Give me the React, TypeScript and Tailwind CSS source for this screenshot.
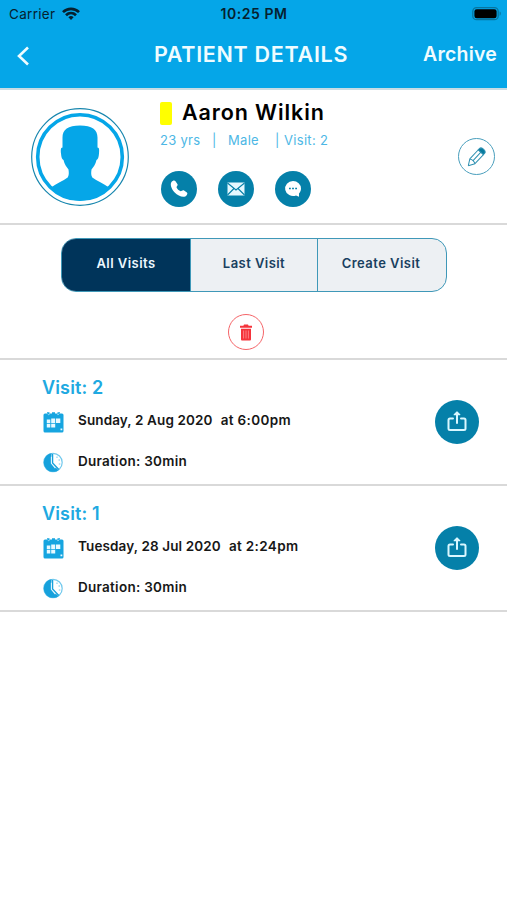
import React from "react";

function Wifi() {
  return (
    <svg width="18" height="14" viewBox="0 0 18 14" className="ml-[7px]" fill="none" stroke="#06212f" strokeWidth="2.7">
      <path d="M1 5.1C5.5.7 12.5.7 17 5.1" />
      <path d="M4 8.2C6.9 5.4 11.1 5.4 14 8.2" />
      <path d="M6.4 10.2a3.7 3.7 0 0 1 5.2 0L9 13z" fill="#06212f" stroke="none" />
    </svg>
  );
}

function Battery() {
  return (
    <svg width="30" height="14" viewBox="0 0 30 14">
      <rect x=".8" y=".7" width="25.4" height="12" rx="3.8" fill="none" stroke="#08759f" strokeWidth="1.3" />
      <rect x="2.4" y="2.2" width="22.2" height="9" rx="2.3" fill="#000" />
      <path d="M27.6 4.6v4.2c1.4-.5 1.8-3.7 0-4.2z" fill="#08759f" />
    </svg>
  );
}

function Avatar() {
  return (
    <svg width="98" height="98" viewBox="0 0 98 98">
      <circle cx="49" cy="49" r="48.3" fill="#fff" stroke="#1786ae" strokeWidth="1.2" />
      <circle cx="49" cy="49" r="42.3" fill="#fff" stroke="#05a6e8" strokeWidth="3.6" />
      <path
        d="M49 17.5c-12 0-17.5 4-17.500 12v10c-2 0-1.800 3-1.500 6 .3 3.500 1 6 2.500 6.500 1 4.500 3 7 5 9.500.5 4 .5 5.500-.8 8C32 73 25.500 75.500 20 79.500 27 88 37 92.500 49 92.500S71 88 78 79.500c-5.500-4-12-6.500-16.700-10-1.300-2.500-1.300-4-.8-8 2-2.500 4-5 5-9.500 1.500-.5 2.200-3 2.500-6.500.3-3 .5-6-1.500-6v-10c0-8-5.500-12-17.500-12z"
        fill="#05a6e8"
      />
    </svg>
  );
}

function RoundIcon({ children }: { children: React.ReactNode }) {
  return (
    <div className="flex size-9 items-center justify-center rounded-full bg-[#0580a9]">
      <svg width="20" height="20" viewBox="0 0 20 20">{children}</svg>
    </div>
  );
}

function Pencil() {
  return (
    <svg width="20" height="20" viewBox="0 0 20 20" fill="none" stroke="#2e90b1" strokeWidth="1" strokeLinejoin="round">
      <g transform="translate(1.300 18.700) rotate(43)">
        <path d="M0 0-3.500-6V-18.500M0 0 3.500-6V-18.500M-3.500-6Q0-8 3.500-6M0-7V-18.500" />
        <path d="M-3.500-18.300V-20Q-3.500-22.500 0-22.500T3.500-20V-18.300z" fill="#087b9e" />
      </g>
    </svg>
  );
}

function Trash() {
  return (
    <svg width="12" height="17" viewBox="0 0 12 17">
      <path d="M4 .5h4l.6 1.200H12v2H0v-2h3.400zM1 4.700h10v10.600c0 .8-.5 1.200-1.200 1.200H2.200c-.7 0-1.200-.4-1.200-1.200z" fill="#f5333b" />
      <path d="M3.600 6.500v8M6 6.500v8M8.400 6.500v8" stroke="#ff9294" strokeWidth=".8" />
    </svg>
  );
}

function Calendar() {
  return (
    <svg width="21" height="22" viewBox="0 0 21 22">
      <path d="M2 2.500h2V1.200h2.500v1.300H9V1.200h3v1.300h2.500V1.200H17v1.300h2A1.500 1.500 0 0 1 20.500 4v16a1.500 1.500 0 0 1-1.500 1.500H2A1.500 1.500 0 0 1 .5 20V4A1.500 1.500 0 0 1 2 2.500z" fill="#16a5e0" />
      <path d="M4.300 2.500q1 2.500 2.800 0M13.700 2.500q1 2.500 2.800 0" fill="none" stroke="#a9e1f7" strokeWidth=".9" />
      <path d="M3.800 8.500h3.500v3.500H3.800zM8.200 7.500h4v4.500h-4zM13 7.500h4.300v4.500H13zM3.800 12.800h3.500v3.700H3.800zM8.200 12.800h4v3.700h-4zM17.500 17.500h1.800v1.800h-1.800z" fill="#e8f9ff" />
    </svg>
  );
}

function Clock() {
  return (
    <svg width="20" height="21" viewBox="0 0 20 21">
      <circle cx="10" cy="10.5" r="9.2" fill="#fff" stroke="#72c9ed" strokeWidth="1.2" />
      <path d="M8.500 1.200A9.400 9.400 0 1 0 15.500 18.200L8.600 11.500z" fill="#16a1dc" />
      <path d="M8.500 4.800v6.500l4 4.700" fill="none" stroke="#e9f9ff" strokeWidth="1.300" />
      <path d="M9.600 2v9l6.200 6.500" fill="none" stroke="#16a1dc" strokeWidth="1.300" />
      <path d="M14 4.500v1.500M17 8h-1.500M17.300 12h-1.500" stroke="#72c9ed" />
    </svg>
  );
}

function Share() {
  return (
    <svg width="20" height="22" viewBox="0 0 20 22" fill="none" stroke="#d9f7ff" strokeWidth="2" strokeLinecap="round" strokeLinejoin="round">
      <path d="M6 8.500H3A1.500 1.500 0 0 0 1.500 10v8.500A1.500 1.500 0 0 0 3 20h14a1.500 1.500 0 0 0 1.500-1.500V10A1.500 1.500 0 0 0 17 8.500h-3" />
      <path d="M10 13V3" />
      <path d="M7.200 4.700 10 2l2.800 2.700z" fill="#d9f7ff" strokeWidth="1.200" />
    </svg>
  );
}

function Visit({ title, date, time }: { title: string; date: string; time: string }) {
  return (
    <section className="flex h-[126px] items-start justify-between border-b-2 border-[#d9d9d9] pr-7 pl-[42px]">
      <div className="pt-[18px]">
        <h2 className="h-5 text-[18px] leading-5 font-semibold tracking-[0.15px] text-[#20a9e1]">{title}</h2>
        <div className="mt-[13px] flex h-[22px] items-center pl-px">
          <Calendar />
          <p className="mb-1 ml-[14px] flex gap-2 text-[13.5px] leading-5 font-semibold whitespace-nowrap text-[#171717]">
            <span className="tracking-[0.12px]">{date}</span>
            <span className="tracking-[0.35px]">{time}</span>
          </p>
        </div>
        <div className="mt-[19px] flex h-[21px] items-center pl-px">
          <Clock />
          <p className="mb-[3px] ml-[15px] text-[13.5px] leading-5 font-semibold tracking-[0.27px] text-[#171717]">Duration: 30min</p>
        </div>
      </div>
      <button className="mt-10 flex size-11 items-center justify-center rounded-full bg-[#0580a9] pb-[3px]">
        <Share />
      </button>
    </section>
  );
}

export default function App() {
  return (
    <main className="h-[900px] w-full overflow-hidden bg-white font-['Inter',sans-serif]">
      <header className="h-[90px] border-b-2 border-[#c9dce4] bg-[#05a6e8]">
        <div className="grid h-7 grid-cols-3 items-center pr-[5px] pl-[9px]">
          <div className="flex items-center text-[13.5px] tracking-[0.3px] text-[#06212f]">
            <span>Carrier</span>
            <Wifi />
          </div>
          <div className="pr-[3px] text-center text-[14px] leading-[18px] font-semibold tracking-[0.55px] whitespace-nowrap text-[#06212f]">10:25 PM</div>
          <div className="flex justify-end"><Battery /></div>
        </div>
        <div className="flex h-[52px] items-center pr-[10px] pl-[17px] text-[#effcff]">
          <svg width="12" height="20" viewBox="0 0 12 20" className="mt-1" fill="none" stroke="currentColor" strokeWidth="2.6">
            <path d="M11 1.500 2 10l9 8.500" />
          </svg>
          <h1 className="ml-[125px] text-[21.5px] font-semibold tracking-[0.7px] whitespace-nowrap">PATIENT DETAILS</h1>
          <button className="mt-[2px] ml-auto text-[19.5px] font-semibold tracking-[0.2px]">Archive</button>
        </div>
      </header>

      <section className="flex h-[135px] items-start border-b-2 border-[#d9d9d9] pr-3 pl-[31px]">
        <div className="mt-[18px]"><Avatar /></div>
        <div className="ml-[31px] flex-1 pt-[10px]">
          <div className="flex h-6 items-center">
            <span className="mt-[2px] h-[23px] w-3 rounded-[2px] bg-[#ffff00]" />
            <h2 className="ml-[10px] text-[21.5px] font-semibold tracking-[0.9px] whitespace-nowrap text-black">Aaron Wilkin</h2>
          </div>
          <div className="mt-[7px] flex h-5 items-center text-[13px] tracking-[0.3px] whitespace-nowrap text-[#4db7e5]">
            <span className="w-[52px]">23 yrs</span>
            <span className="w-4">|</span>
            <span className="w-[47px]">Male</span>
            <span className="w-[9px]">|</span>
            <span>Visit: 2</span>
          </div>
          <div className="mt-5 ml-px flex gap-[21px]">
            <RoundIcon>
              <path d="M2.500 3C4 1.200 5.500 1 6.500 2.200l2 3c.7 1.200-.9 2-1 3 .7 1.800 2.300 3.300 4.200 4 1-.2 2-1.500 3-.9l3.200 2.200c1.200 1-.2 3.300-1.700 4-3 1.200-7.500-1-10.500-4S.7 5.500 2.500 3z" fill="#fff" />
            </RoundIcon>
            <RoundIcon>
              <rect x="1.500" y="3.500" width="17" height="13" fill="#e5f8ff" />
              <path d="m1.500 4 8.500 7 8.500-7M1.500 16l6.500-6.500M18.500 16 12 9.500" fill="none" stroke="#0580a9" strokeWidth="1.100" />
            </RoundIcon>
            <RoundIcon>
              <path d="M10 2a8 7.500 0 0 1 8 7.500c0 2-.8 3.800-2 5v3.300L13 16.500A8 7.500 0 1 1 10 2z" fill="#fff" />
              <path d="M6 9.500h1.800M9.100 9.500h1.800M12.200 9.500H14" stroke="#0580a9" strokeWidth="1.400" />
            </RoundIcon>
          </div>
        </div>
        <button className="mt-12 flex size-[37px] items-center justify-center rounded-full border border-[#4a9fbd]">
          <Pencil />
        </button>
      </section>

      <section className="h-[135px] border-b-2 border-[#d9d9d9] pt-[13px]">
        <div className="ml-[61px] flex h-[54px] w-[386px] overflow-hidden rounded-[15px] border-[1.5px] border-[#3f98b8] bg-[#edf0f3] text-[13px] font-semibold tracking-[0.45px] text-[#19405f]">
          <button className="w-[128px] bg-[#00345a] pb-[3px] text-[#edf8ff]">All Visits</button>
          <button className="w-[127px] border-l border-[#3f98b8] pb-[3px]">Last Visit</button>
          <button className="flex-1 border-l border-[#3f98b8] pr-[2px] pb-[3px]">Create Visit</button>
        </div>
        <button className="mt-[22px] ml-[228px] flex size-9 items-center justify-center rounded-full border border-[#f56468]">
          <Trash />
        </button>
      </section>

      <Visit title="Visit: 2" date="Sunday, 2 Aug 2020" time="at 6:00pm" />
      <Visit title="Visit: 1" date="Tuesday, 28 Jul 2020" time="at 2:24pm" />
    </main>
  );
}
